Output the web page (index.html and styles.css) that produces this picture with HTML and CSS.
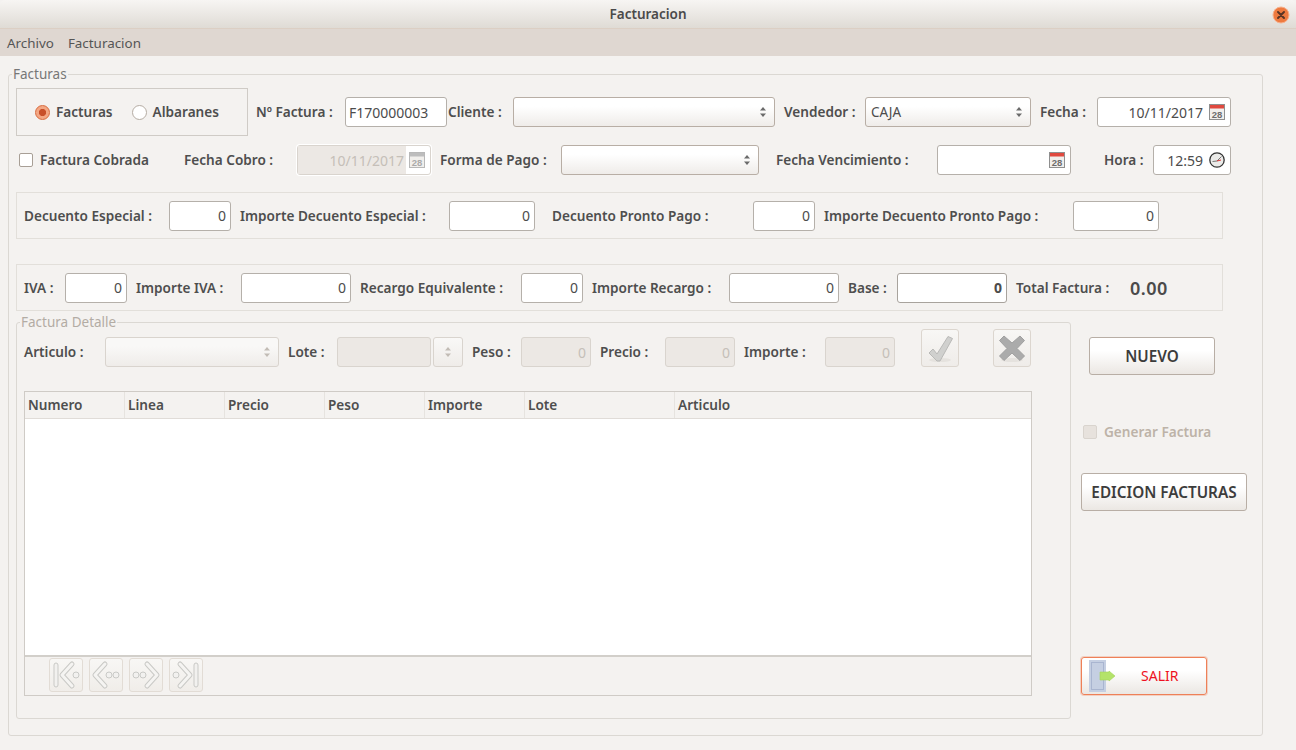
FILE: index.html
```html
<!DOCTYPE html>
<html lang="es">
<head>
<meta charset="utf-8">
<title>Facturacion</title>
<link rel="stylesheet" href="styles.css">
</head>
<body>
<svg class="defs" width="0" height="0" aria-hidden="true">
  <symbol id="spin" viewBox="0 0 8 14">
    <path d="M4 2 7 5.500H1z"/><path d="M4 12 1 8.500h6z"/>
  </symbol>
</svg>
<div class="window">
  <header class="titlebar">
    <span class="title">Facturacion</span>
    <svg class="close" width="18" height="18" viewBox="0 0 18 18"><circle cx="9" cy="9" r="8" fill="#ee7a3f" stroke="#f6b08c"/><path d="M6 6l6 6M12 6l-6 6" stroke="#5a3525" stroke-width="2" stroke-linecap="round"/></svg>
  </header>
  <nav class="menubar"><span>Archivo</span><span>Facturacion</span></nav>
  <main class="content">
    <section class="frame main-frame">
      <span class="legend">Facturas</span>
      <div class="grid row1">
        <div class="group">
          <span class="radio on"></span><span class="lbl first gl1">Facturas</span>
          <span class="radio"></span><span class="lbl first">Albaranes</span>
        </div>
        <span class="lbl p8">Nº Factura :</span>
        <div class="entry left">F170000003</div>
        <span class="lbl p1">Cliente :</span>
        <div class="combo"><svg class="arrows"><use href="#spin"/></svg></div>
        <span class="lbl">Vendedor :</span>
        <div class="combo"><span>CAJA</span><svg class="arrows"><use href="#spin"/></svg></div>
        <span class="lbl">Fecha :</span>
        <div class="entry date">10/11/2017<svg class="ico" viewBox="0 0 16 16"><rect x=".5" y=".5" width="15" height="15" fill="#f1efec" stroke="#8f8f8f"/><rect x="1" y="1" width="14" height="3.500" fill="#e0493f"/><text x="8" y="13.800" text-anchor="middle" class="caltxt">28</text></svg></div>
      </div>
      <div class="grid row2">
        <label class="check"><span class="box"></span><span class="lbl first">Factura Cobrada</span></label>
        <span class="lbl first">Fecha Cobro :</span>
        <div class="entry date off"><span class="offval">10/11/2017</span><svg class="ico" viewBox="0 0 16 16"><rect x=".5" y=".5" width="15" height="15" fill="#f1efec" stroke="#b8b8b8"/><rect x="1" y="1" width="14" height="3.500" fill="#bdbdbd"/><text x="8" y="13.800" text-anchor="middle" class="caltxt dim">28</text></svg></div>
        <span class="lbl">Forma de Pago :</span>
        <div class="combo"><svg class="arrows"><use href="#spin"/></svg></div>
        <span class="lbl p17">Fecha Vencimiento :</span>
        <div class="entry date"><svg class="ico" viewBox="0 0 16 16"><rect x=".5" y=".5" width="15" height="15" fill="#f1efec" stroke="#8f8f8f"/><rect x="1" y="1" width="14" height="3.500" fill="#e0493f"/><text x="8" y="13.800" text-anchor="middle" class="caltxt">28</text></svg></div>
        <span class="lbl p33">Hora :</span>
        <div class="entry date">12:59<svg class="ico" viewBox="0 0 16 16"><circle cx="8" cy="8" r="7.200" fill="#ebebe9" stroke="#333" stroke-width="1.300"/><path d="M3.500 9.500 8 9l4.500-4.500" fill="none" stroke="#777"/><path d="M8 9l4-1" stroke="#d33"/></svg></div>
      </div>
      <div class="band grid row3">
        <span class="lbl first">Decuento Especial :</span><div class="entry">0</div>
        <span class="lbl">Importe Decuento Especial :</span><div class="entry">0</div>
        <span class="lbl p17">Decuento Pronto Pago :</span><div class="entry">0</div>
        <span class="lbl">Importe Decuento Pronto Pago :</span><div class="entry">0</div>
      </div>
      <div class="band grid row4">
        <span class="lbl first">IVA :</span><div class="entry">0</div>
        <span class="lbl">Importe IVA :</span><div class="entry">0</div>
        <span class="lbl">Recargo Equivalente :</span><div class="entry">0</div>
        <span class="lbl">Importe Recargo :</span><div class="entry">0</div>
        <span class="lbl">Base :</span><div class="entry strong">0</div>
        <span class="lbl">Total Factura :</span><span class="total">0.00</span>
      </div>
      <div class="lower">
        <section class="frame detail">
          <span class="legend muted">Factura Detalle</span>
          <div class="grid row5">
            <span class="lbl first">Articulo :</span>
            <div class="combo off"><svg class="arrows"><use href="#spin"/></svg></div>
            <span class="lbl">Lote :</span>
            <div class="entry off"></div>
            <div class="spinbtn"><svg class="arrows"><use href="#spin"/></svg></div>
            <span class="lbl">Peso :</span><div class="entry off">0</div>
            <span class="lbl">Precio :</span><div class="entry off">0</div>
            <span class="lbl">Importe :</span><div class="entry off">0</div>
            <div class="iconcell c1">
              <button class="iconbtn"><svg width="32" height="32" viewBox="0 0 32 32"><ellipse cx="16" cy="28" rx="11" ry="2" fill="#e5e2de"/><path d="M5 21l4-4 4 5L24 4.500l4.500 2L16 29h-3z" fill="#d0d0ce" stroke="#b9b9b7"/></svg></button>
            </div>
            <div class="iconcell c2">
              <button class="iconbtn"><svg width="32" height="32" viewBox="0 0 32 32"><ellipse cx="16" cy="28" rx="11" ry="2" fill="#e5e2de"/><path d="M8 4l8 7 8-7 4.500 4.500-7.500 8 7.500 7.500L24 28.500 16 21l-8 7.500L3.500 24l7.500-7.500-7.500-8z" fill="#ababab" stroke="#a0a0a0"/></svg></button>
            </div>
          </div>
          <div class="table">
            <div class="thead">
              <span>Numero</span><span>Linea</span><span>Precio</span><span>Peso</span><span>Importe</span><span>Lote</span><span>Articulo</span>
            </div>
            <div class="tbody"></div>
            <div class="tfoot">
              <button class="nav"><svg width="32" height="32" viewBox="0 0 32 32"><rect x="4" y="4" width="4" height="24" rx="2" class="nv"/><path d="M22 5 12 16l10 11" class="nv-line"/><path d="M22 5 12 16l10 11" class="nv-in"/><circle cx="26" cy="16" r="3" class="nv"/></svg></button>
              <button class="nav"><svg width="32" height="32" viewBox="0 0 32 32"><path d="M15 5 5 16l10 11" class="nv-line"/><path d="M15 5 5 16l10 11" class="nv-in"/><circle cx="19" cy="16" r="3" class="nv"/><circle cx="26" cy="16" r="3" class="nv"/></svg></button>
              <button class="nav"><svg width="32" height="32" viewBox="0 0 32 32"><circle cx="6" cy="16" r="3" class="nv"/><circle cx="13" cy="16" r="3" class="nv"/><path d="M17 5l10 11-10 11" class="nv-line"/><path d="M17 5l10 11-10 11" class="nv-in"/></svg></button>
              <button class="nav"><svg width="32" height="32" viewBox="0 0 32 32"><circle cx="6" cy="16" r="3" class="nv"/><path d="M10 5l10 11-10 11" class="nv-line"/><path d="M10 5l10 11-10 11" class="nv-in"/><rect x="24" y="4" width="4" height="24" rx="2" class="nv"/></svg></button>
            </div>
          </div>
        </section>
        <aside class="side">
          <button class="btn nuevo">NUEVO</button>
          <label class="check gen"><span class="box dis"></span><span class="lbl first dis-t">Generar Factura</span></label>
          <button class="btn edicion">EDICION FACTURAS</button>
          <button class="btn salir">
            <svg class="door" width="34" height="32" viewBox="0 0 34 32"><rect width="17" height="32" fill="#c5cfe2"/><rect x="2.500" y="2.500" width="12" height="27" fill="none" stroke="#a9b5d0"/><path d="M11 12h9V11l6 5-6 5v-1h-9z" fill="#b4e36a" stroke="#a4d35a" stroke-width=".6"/></svg>
            <span>SALIR</span>
          </button>
        </aside>
      </div>
    </section>
  </main>
</div>
</body>
</html>
```
FILE: styles.css
```css
* { box-sizing: border-box; }
html, body { margin: 0; height: 100%; }
body {
  width: 1296px; height: 750px; overflow: hidden; background: #f4f2f0;
  font-family: "Noto Sans", "Open Sans", sans-serif; font-size: 14px; color: #4c4c4c;
}
.defs { position: absolute; }
.window { width: 1296px; height: 750px; display: flex; flex-direction: column; background: #f4f2f0; border-radius: 5px 5px 0 0; overflow: hidden; }
.titlebar {
  height: 29px; flex: none; position: relative; display: flex; align-items: center; justify-content: center;
  background: linear-gradient(#f7f5f3, #dfdbd5); border-bottom: 1px solid #dccfc4;
}
.title { font-weight: 600; color: #4a4a4a; font-size: 13.5px; }
.close { position: absolute; right: 6px; top: 6px; }
.menubar { height: 27px; flex: none; background: #dfd7d1; display: flex; align-items: center; padding-left: 7px; gap: 14px; color: #555; font-size: 13.4px; }
.content { padding: 18px 0 0 8px; }
.frame { position: relative; border: 1px solid #dbd8d3; border-radius: 3px; }
.legend { position: absolute; top: -9px; left: 3px; background: #f4f2f0; padding: 0 1px; line-height: 16px; font-size: 13.5px; color: #777; }
.legend.muted { color: #b3aca4; }
.main-frame { width: 1255px; height: 662px; padding: 13px 0 0 7px; }
.grid { display: grid; align-items: center; }
.row1 { height: 48px; grid-template-columns: 232px 97px 102px 66px 262px 90px 166px 66px 134px; }
.row2 { height: 30px; margin-top: 9px; grid-template-columns: 168px 113px 134px 130px 198px 178px 134px 82px 78px; }
.band { width: 1207px; height: 47px; border: 1px solid #e2dfda; padding-left: 7px; }
.row3 { margin-top: 17px; grid-template-columns: 145px 62px 218px 86px 218px 62px 258px 86px; }
.row4 { margin-top: 25px; grid-template-columns: 41px 62px 114px 110px 170px 62px 146px 110px 58px 110px 123px 60px; }
.row5 { height: 38px; align-items: end; grid-template-columns: 81px 174px 58px 94px 32px 58px 70px 74px 70px 90px 70px 64px 72px; }
.row5 .lbl { height: 30px; line-height: 30px; }
.lbl { display: block; padding-left: 9px; font-weight: 600; font-size: 13.6px; line-height: 18px; white-space: nowrap; color: #4e4e4e; }
.lbl.first { padding-left: 0; }
.p1 { padding-left: 1px; }
.p8 { padding-left: 8px; }
.p17 { padding-left: 17px; }
.p33 { padding-left: 33px; }
.group { height: 48px; border: 1px solid #cfcbc6; display: flex; align-items: center; padding-left: 18px; }
.radio { width: 15px; height: 15px; flex: none; border-radius: 50%; border: 1px solid #b5aca3; background: #fff; margin-right: 6px; }
.radio.on { border-color: #d86a3c; background: radial-gradient(circle, #c8502a 0 3.2px, #f3a784 4px); }
.gl1 { margin-right: 19px; }
.entry {
  height: 30px; background: #fff; border: 1px solid #b5b0aa; border-radius: 3px; display: flex; align-items: center;
  justify-content: flex-end; padding: 0 4px 0 3px; color: #4c4c4c; font-size: 14px;
}
.entry.left { justify-content: flex-start; }
.entry.strong { font-weight: 700; border-color: #a8a39d; }
.entry.off { background: #ece8e4; border-color: #d9d4ce; color: #c5bfb8; }
.entry.date { padding-right: 5px; gap: 6px; }
.entry.date.off { padding: 0 5px 0 0; gap: 3px; background: #fff; box-shadow: 0 0 0 1px #fff; }
.offval { align-self: stretch; flex: 1; background: #ece8e4; display: flex; align-items: center; justify-content: flex-end; padding-right: 2px; color: #c5bfb8; }
.ico { width: 16px; height: 16px; flex: none; }
.caltxt { font-family: "Liberation Sans", sans-serif; font-size: 9.5px; font-weight: 700; fill: #6c6c6c; }
.caltxt.dim { fill: #aaa; }
.combo {
  height: 30px; background: linear-gradient(#ffffff 30%, #efece9); border: 1px solid #b8aea5; border-radius: 3px;
  display: flex; align-items: center; justify-content: space-between; padding: 0 7px 0 5px; font-size: 13.5px;
}
.combo .arrows { margin-left: auto; }
.combo.off, .spinbtn { border: 1px solid #d9d4ce; border-radius: 3px; }
.combo.off { background: linear-gradient(#f9f8f7 30%, #efece9); }
.arrows { width: 8px; height: 14px; fill: #6a6a6a; flex: none; }
.off .arrows, .spinbtn .arrows { fill: #c2bcb5; }
.spinbtn { margin-left: 2px; height: 30px; display: flex; align-items: center; justify-content: center; background: linear-gradient(#f9f8f7, #efece9); }
.check { display: flex; align-items: center; padding-left: 3px; }
.box { width: 14px; height: 14px; flex: none; border: 1px solid #a89f96; border-radius: 2px; background: #fff; margin-right: 7px; }
.box.dis { background: #e7e2dd; border-color: #d9d4ce; }
.lbl.dis-t { color: #bdb3a8; }
.total { font-size: 18px; font-weight: 600; letter-spacing: .5px; color: #4a4a4a; white-space: nowrap; }
.lower { display: flex; margin-top: 11px; }
.detail { width: 1055px; height: 397px; padding: 6px 0 0 7px; flex: none; }
.iconcell { display: flex; justify-content: flex-start; }
.c1 { padding-left: 26px; }
.c2 { padding-left: 34px; }
.iconbtn { width: 38px; height: 38px; padding: 2px; border: 1px solid #dcd6cf; border-radius: 3px; background: linear-gradient(#f8f7f5, #efece9); display: flex; align-items: center; justify-content: center; }
.table { width: 1008px; height: 305px; margin-top: 24px; border: 1px solid #cfcbc6; display: flex; flex-direction: column; }
.thead { height: 27px; flex: none; display: grid; grid-template-columns: 100px 100px 100px 100px 100px 150px 1fr; border-bottom: 1px solid #e0dcd8; background: #f4f2f0; }
.thead span { padding-left: 3px; line-height: 26px; font-weight: 600; font-size: 13.6px; border-right: 1px solid #e6e3df; color: #4e4e4e; }
.thead span:last-child { border-right: 0; }
.tbody { flex: 1; background: #fff; }
.tfoot { height: 40px; flex: none; border-top: 2px solid #d2cfca; display: flex; gap: 6px; padding: 1px 0 0 24px; background: #f4f2f0; }
.nav { width: 34px; height: 34px; padding: 0; border: 1px solid #e2dcd5; border-radius: 3px; background: linear-gradient(#f8f7f5, #f0ede9); display: flex; align-items: center; justify-content: center; }
.nv { fill: #f2f1ef; stroke: #c9c9c6; }
.nv-line { fill: none; stroke: #c9c9c6; stroke-width: 5; stroke-linecap: round; stroke-linejoin: round; }
.nv-in { fill: none; stroke: #f5f4f2; stroke-width: 3; stroke-linecap: round; stroke-linejoin: round; }
.side { padding-left: 10px; display: flex; flex-direction: column; align-items: flex-start; }
.btn { height: 38px; padding: 0 0 1px; border: 1px solid #b8aea5; border-radius: 3px; background: linear-gradient(#ffffff 35%, #ebe7e3); font-family: inherit; font-size: 15.3px; font-weight: 600; color: #3c3c3c; }
.nuevo { width: 126px; margin: 15px 0 0 8px; }
.gen { margin-top: 50px; padding-left: 2px; height: 14px; }
.edicion { width: 166px; margin-top: 34px; }
.salir { width: 126px; margin-top: 146px; border: 1px solid #ee8058; box-shadow: 0 0 0 1px rgba(238, 128, 88, .3); display: flex; align-items: center; padding: 0 0 0 7px; color: #ee1122; font-weight: 400; font-size: 14px; }
.door { flex: none; }
.salir span { margin: 0 0 2px 18px; }
```
